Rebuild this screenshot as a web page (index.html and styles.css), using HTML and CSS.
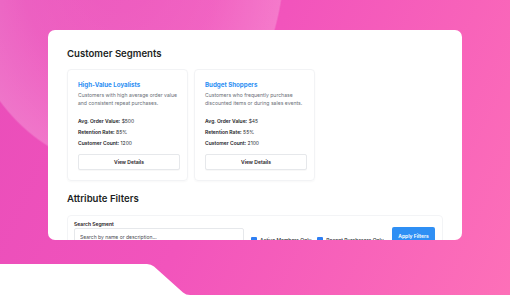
FILE: index.html
```html
<!DOCTYPE html>
<html lang="en">
<head>
  <meta charset="UTF-8">
  <meta name="viewport" content="width=device-width, initial-scale=1.0">
  <title>Customer Segments</title>
  <link rel="stylesheet" href="styles.css">
</head>
<body>
  <div class="stage">
    <div class="panel">
      <h2 class="section-title">Customer Segments</h2>

      <div class="segments">
        <div class="segment">
          <h3 class="segment-name">High-Value Loyalists</h3>
          <p class="segment-desc">Customers with high average order value and consistent repeat purchases.</p>
          <ul class="stats">
            <li><strong>Avg. Order Value:</strong> $500</li>
            <li><strong>Retention Rate:</strong> 85%</li>
            <li><strong>Customer Count:</strong> 1200</li>
          </ul>
          <button class="btn-outline">View Details</button>
        </div>
        <div class="segment">
          <h3 class="segment-name">Budget Shoppers</h3>
          <p class="segment-desc">Customers who frequently purchase discounted items or during sales events.</p>
          <ul class="stats">
            <li><strong>Avg. Order Value:</strong> $45</li>
            <li><strong>Retention Rate:</strong> 55%</li>
            <li><strong>Customer Count:</strong> 2100</li>
          </ul>
          <button class="btn-outline">View Details</button>
        </div>
      </div>

      <h2 class="section-title filters-title">Attribute Filters</h2>

      <div class="filters">
        <div class="search">
          <label class="field-label" for="q">Search Segment</label>
          <input id="q" class="field" type="text" placeholder="Search by name or description...">
        </div>
        <div class="checks">
          <label class="check"><span class="box"></span>Active Members Only</label>
          <label class="check"><span class="box"></span>Recent Purchasers Only</label>
        </div>
        <button class="btn-primary">Apply Filters</button>
      </div>
    </div>
  </div>
</body>
</html>
```

FILE: styles.css
```css
*{margin: 0;padding: 0;box-sizing: border-box;}
body {
  background: #fff;
  font-family: Inter, "Noto Sans", sans-serif;
  width: 510px;
  height: 296px;
  overflow: hidden;
}
.stage {
  height: 296px;
  padding: 30px 48px 0;
  background:
    radial-gradient(165px 208px at 120px -40px, rgba(255,255,255,0.06) 0, rgba(255,255,255,0.1) 60%, rgba(255,255,255,0.22) 99%, rgba(255,255,255,0) 100%),
    linear-gradient(115deg, #e94dba 0%, #f254bc 45%, #fd70b8 100%);
  clip-path: path('M0 0H510V295H190Q186 295 183 292.5L154 266.5Q151 264 147 264H0Z');
}
.panel {
  height: 210px;
  background: #fff;
  border-radius: 7px;
  overflow: hidden;
  padding: 17px 19px 0;
}
.section-title {
  font-size: 9.6px;
  line-height: 14px;
  font-weight: 600;
  color: #1d1f24;
}
.segments {
  display: flex;
  gap: 6px;
  margin-top: 8px;
}
.segment {
  width: 121px;
  height: 112px;
  padding: 10px 9px 0 10px;
  border: 1px solid #f2f3f5;
  border-radius: 4px;
  box-shadow: 0 1px 2px rgba(0,0,0,0.03);
}
.segment-name {
  font-size: 6.2px;
  line-height: 9px;
  font-weight: 700;
  color: #2b8ef3;
}
.segment-desc {
  margin-top: 2px;
  font-size: 5.1px;
  line-height: 8px;
  color: #6b7078;
}
.stats {
  list-style: none;
  margin-top: 10px;
  font-size: 5px;
  line-height: 8px;
  color: #2b2d31;
}
.stats li {margin-bottom: 3px;}
.stats strong {font-weight: 600; color: #1a1b1e;}
.btn-outline {
  display: block;
  width: 102px;
  height: 15.5px;
  margin-top: 7px;
  background: #fff;
  border: 1px solid #e6e8eb;
  border-radius: 2px;
  font-family: inherit;
  font-size: 5px;
  font-weight: 600;
  color: #1f2024;
  box-shadow: 0 1px 1px rgba(0,0,0,0.03);
}
.filters-title {margin-top: 11px;}
.filters {
  display: flex;
  align-items: flex-start;
  margin-top: 9px;
  padding: 5px 7px 0 6px;
  height: 40px;
  border: 1px solid #f3f4f6;
  border-radius: 4px;
}
.search {width: 170px;}
.field-label {
  display: block;
  font-size: 5px;
  line-height: 6px;
  font-weight: 600;
  color: #1f2024;
}
.field {
  display: block;
  width: 100%;
  height: 17px;
  margin-top: 1px;
  padding: 0 5px;
  border: 1px solid #e6e8eb;
  border-radius: 2px;
  font-family: inherit;
  font-size: 5px;
  color: #333;
}
.field::placeholder {color: #4a4c52;}
.checks {
  display: flex;
  gap: 6px;
  margin: 16px 0 0 7px;
}
.check {
  display: flex;
  align-items: center;
  gap: 3px;
  font-size: 5px;
  line-height: 6px;
  font-weight: 500;
  color: #2a2c30;
}
.box {
  width: 6px;
  height: 6px;
  border-radius: 1px;
  background: #2f7ff3;
}
.btn-primary {
  margin-left: auto;
  margin-top: 6px;
  width: 43px;
  height: 17px;
  background: #2f8ff4;
  border: none;
  border-radius: 2px;
  font-family: inherit;
  font-size: 5px;
  font-weight: 600;
  color: #fff;
}
```
